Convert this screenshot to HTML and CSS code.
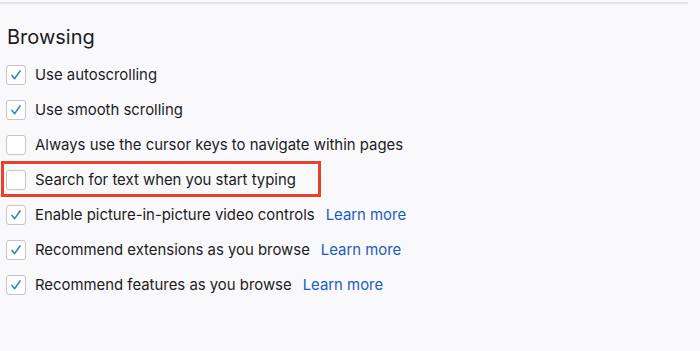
FILE: index.html
```html
<!DOCTYPE html>
<html>
<head>
<meta charset="utf-8">
<link rel="stylesheet" href="styles.css">
</head>
<body>
<div class="page">
  <div class="rule"></div>
  <h1 class="title">Browsing</h1>
  <div class="list">
    <div class="row"><span class="box checked"><svg viewBox="0 0 20 20"><path d="M5.5 10.5 L8.5 14 L14.5 5.5"/></svg></span><span class="label">Use autoscrolling</span></div>
    <div class="row"><span class="box checked"><svg viewBox="0 0 20 20"><path d="M5.5 10.5 L8.5 14 L14.5 5.5"/></svg></span><span class="label">Use smooth scrolling</span></div>
    <div class="row"><span class="box"></span><span class="label">Always use the cursor keys to navigate within pages</span></div>
    <div class="row highlighted"><span class="box"></span><span class="label">Search for text when you start typing</span><span class="mark"></span></div>
    <div class="row"><span class="box checked"><svg viewBox="0 0 20 20"><path d="M5.5 10.5 L8.5 14 L14.5 5.5"/></svg></span><span class="label">Enable picture-in-picture video controls</span><a class="link">Learn more</a></div>
    <div class="row"><span class="box checked"><svg viewBox="0 0 20 20"><path d="M5.5 10.5 L8.5 14 L14.5 5.5"/></svg></span><span class="label">Recommend extensions as you browse</span><a class="link">Learn more</a></div>
    <div class="row"><span class="box checked"><svg viewBox="0 0 20 20"><path d="M5.5 10.5 L8.5 14 L14.5 5.5"/></svg></span><span class="label">Recommend features as you browse</span><a class="link">Learn more</a></div>
  </div>
</div>
</body>
</html>
```
FILE: styles.css
```css
html, body {
  margin: 0;
  padding: 0;
  background: #f9f9fb;
}
.page {
  width: 700px;
  height: 351px;
  font-family: "Inter", "Liberation Sans", sans-serif;
  color: #1c1b22;
  padding-top: 2px;
  box-sizing: border-box;
}
.rule {
  width: 688px;
  height: 2px;
  background: #e3e3e8;
}
.title {
  margin: 20px 0 0 7px;
  font-size: 20px;
  font-weight: 400;
  line-height: 26px;
  letter-spacing: 0;
}
.list {
  display: flex;
  flex-direction: column;
  margin-top: 7px;
}
.row {
  position: relative;
  display: flex;
  align-items: center;
  height: 35px;
  padding-left: 6px;
  font-size: 14.9px;
}
.box {
  width: 18px;
  height: 18px;
  border: 1px solid #c4c4c9;
  border-radius: 3px;
  background: #fff;
  flex: none;
  display: flex;
  align-items: center;
  justify-content: center;
}
.box svg {
  width: 18px;
  height: 18px;
}
.box svg path {
  fill: none;
  stroke: #2b8ab8;
  stroke-width: 1.8;
  stroke-linecap: round;
  stroke-linejoin: round;
}
.label {
  margin-left: 9px;
}
.link {
  margin-left: 11px;
  color: #1b5cc4;
}
.mark {
  position: absolute;
  left: 1px;
  top: -1px;
  width: 314px;
  height: 30px;
  border: 3px solid #e8412c;
}
```
